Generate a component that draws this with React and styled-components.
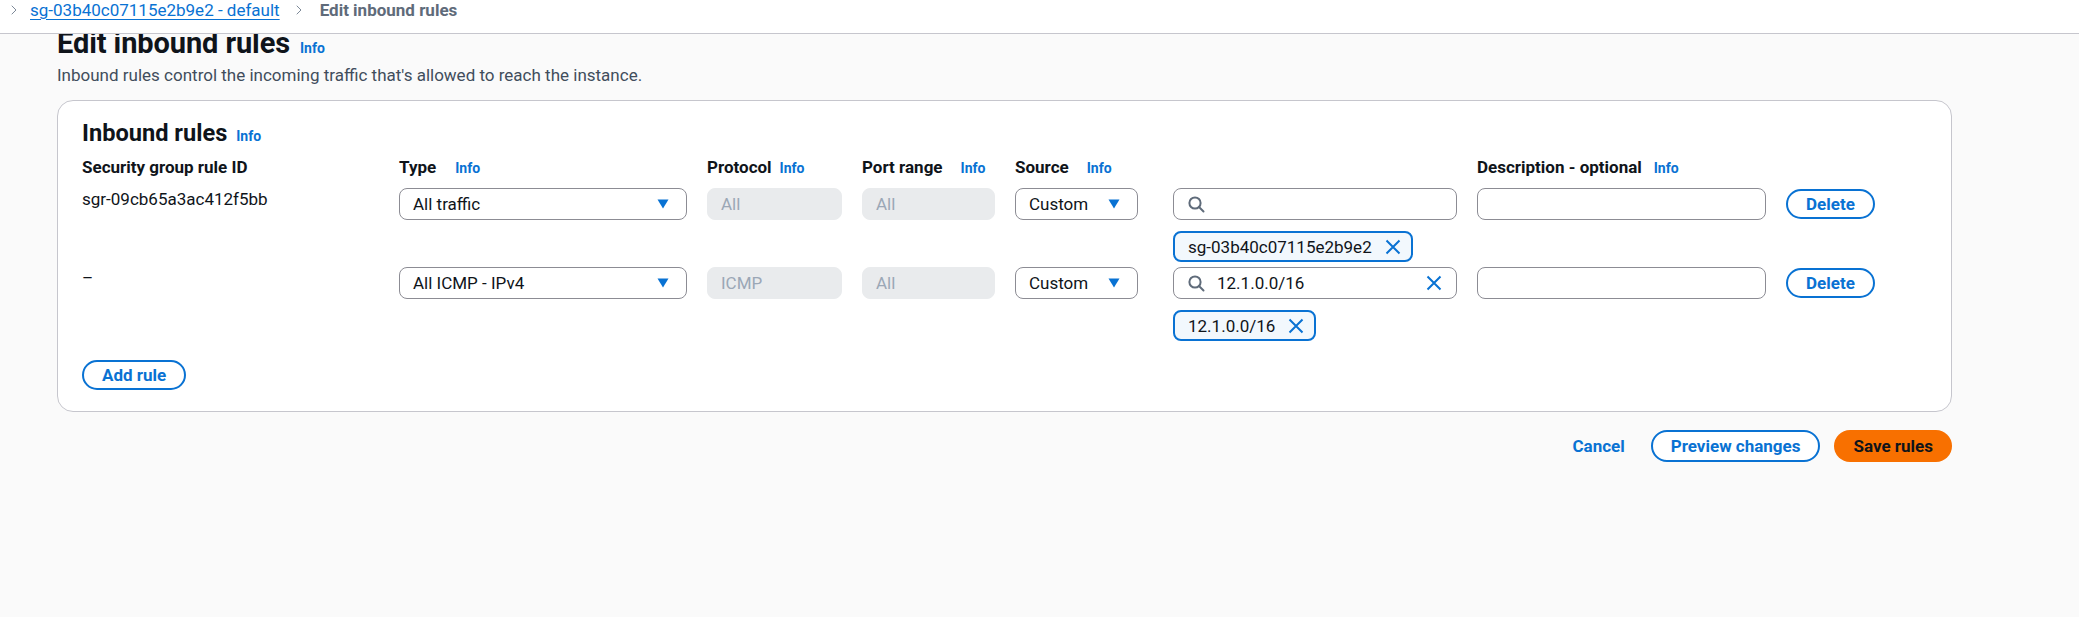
import React from 'react';
import styled, { createGlobalStyle } from 'styled-components';
import { ChevronRight } from 'lucide-react';

const GlobalStyle = createGlobalStyle`
  body {
    margin: 0;
    background: #fafafa;
    font-family: Roboto, "Liberation Sans", sans-serif;
    color: #0f141a;
  }
`;

const columns = '297px 288px 135px 133px 138px 284px 289px auto';

const rules = [
  {
    id: 'sgr-09cb65a3ac412f5bb',
    type: 'All traffic',
    protocol: 'All',
    port: 'All',
    query: '',
    token: 'sg-03b40c07115e2b9e2',
  },
  {
    id: '–',
    type: 'All ICMP - IPv4',
    protocol: 'ICMP',
    port: 'All',
    query: '12.1.0.0/16',
    token: '12.1.0.0/16',
  },
];

function Caret() {
  return (
    <svg width="12" height="10" viewBox="0 0 12 10">
      <path d="M0.5 0.5 H11.5 L6 9.5 Z" fill="#0972d3" />
    </svg>
  );
}

function SearchIcon() {
  return (
    <svg width="17" height="17" viewBox="0 0 17 17" fill="none" stroke="#5f6b7a" strokeWidth="2">
      <circle cx="7" cy="7" r="5.6" />
      <path d="M11 11 L15.5 15.5" strokeLinecap="round" />
    </svg>
  );
}

function CloseIcon() {
  return (
    <svg width="16" height="16" viewBox="0 0 16 16" fill="none" stroke="#0972d3" strokeWidth="2">
      <path d="M1.5 1.5 L14.5 14.5 M14.5 1.5 L1.5 14.5" />
    </svg>
  );
}

export default function App() {
  return (
    <>
      <GlobalStyle />
      <TopBar>
        <Crumb>
          <ChevronRight size={16} strokeWidth={1.5} color="#7d8998" />
        </Crumb>
        <CrumbLink>sg-03b40c07115e2b9e2 - default</CrumbLink>
        <Crumb>
          <ChevronRight size={16} strokeWidth={1.5} color="#7d8998" />
        </Crumb>
        <CrumbCurrent>Edit inbound rules</CrumbCurrent>
      </TopBar>

      <Main>
        <PageHeader>
          <Title>Edit inbound rules</Title>
          <Info>Info</Info>
        </PageHeader>
        <Lead>Inbound rules control the incoming traffic that's allowed to reach the instance.</Lead>

        <Card>
          <CardTitle>
            Inbound rules <Info>Info</Info>
          </CardTitle>

          <HeaderRow>
            <ColLabel>Security group rule ID</ColLabel>
            <ColLabel>Type <Info gap={19}>Info</Info></ColLabel>
            <ColLabel>Protocol <Info gap={8}>Info</Info></ColLabel>
            <ColLabel>Port range <Info gap={18}>Info</Info></ColLabel>
            <ColLabel>Source <Info gap={18}>Info</Info></ColLabel>
            <span />
            <ColLabel>Description - optional <Info gap={12}>Info</Info></ColLabel>
            <span />
          </HeaderRow>

          <RuleList>
            {rules.map((r) => (
              <RuleRow key={r.type}>
                <RuleId>{r.id}</RuleId>
                <Select>
                  <span>{r.type}</span>
                  <Caret />
                </Select>
                <Disabled>{r.protocol}</Disabled>
                <Disabled>{r.port}</Disabled>
                <Select narrow>
                  <span>Custom</span>
                  <Caret />
                </Select>
                <SourceCell>
                  <SearchBox>
                    <SearchIcon />
                    <SearchText>{r.query}</SearchText>
                    {r.query && <CloseIcon />}
                  </SearchBox>
                  <Token>
                    {r.token}
                    <CloseIcon />
                  </Token>
                </SourceCell>
                <TextBox />
                <ButtonCell>
                  <OutlineButton>Delete</OutlineButton>
                </ButtonCell>
              </RuleRow>
            ))}
          </RuleList>

          <AddRow>
            <OutlineButton>Add rule</OutlineButton>
          </AddRow>
        </Card>

        <Footer>
          <LinkButton>Cancel</LinkButton>
          <OutlineButton tall>Preview changes</OutlineButton>
          <PrimaryButton>Save rules</PrimaryButton>
        </Footer>
      </Main>
    </>
  );
}

const TopBar = styled.div`
  box-sizing: border-box;
  height: 34px;
  padding: 0 0 0 6px;
  background: #ffffff;
  border-bottom: 1px solid #c6c6cd;
  display: flex;
  align-items: flex-start;
`;

const Crumb = styled.span`
  display: flex;
  align-items: center;
  height: 20px;
  margin-right: 8px;
`;

const CrumbLink = styled.a`
  font-size: 17px;
  line-height: 20px;
  color: #0972d3;
  text-decoration: underline;
  text-underline-offset: 3px;
  margin-right: 11px;
`;

const CrumbCurrent = styled.span`
  font-size: 17px;
  line-height: 20px;
  font-weight: 700;
  color: #5f6b7a;
  margin-left: 5px;
`;

const Main = styled.main`
  overflow: hidden;
  padding: 0 127px 40px 57px;
`;

const PageHeader = styled.div`
  display: flex;
  align-items: baseline;
  margin-top: -7px;
`;

const Title = styled.h1`
  margin: 0;
  font-size: 29px;
  line-height: 32px;
  font-weight: 700;
  color: #0f141a;
  letter-spacing: -0.1px;
`;

const Info = styled.span`
  font-size: 14px;
  font-weight: 700;
  color: #0972d3;
  margin-left: ${(p) => (p.gap ?? 10)}px;
`;

const Lead = styled.p`
  margin: 6px 0 0;
  font-size: 17px;
  line-height: 20px;
  color: #414d5c;
`;

const Card = styled.section`
  margin-top: 15px;
  background: #ffffff;
  border: 1px solid #c6c6cd;
  border-radius: 16px;
  padding: 18px 24px 21px;
`;

const CardTitle = styled.h2`
  margin: 0;
  font-size: 23.6px;
  line-height: 28px;
  font-weight: 700;
  color: #0f141a;
  display: flex;
  align-items: baseline;
  & > span {
    margin-left: 9px;
  }
`;

const HeaderRow = styled.div`
  display: grid;
  grid-template-columns: ${columns};
  column-gap: 20px;
  margin-top: 7px;
`;

const ColLabel = styled.div`
  font-size: 17px;
  line-height: 20px;
  font-weight: 700;
  color: #0f141a;
  display: flex;
  align-items: baseline;
`;

const RuleList = styled.div`
  display: flex;
  flex-direction: column;
  gap: 5px;
  margin-top: 10px;
`;

const RuleRow = styled.div`
  display: grid;
  grid-template-columns: ${columns};
  column-gap: 20px;
  align-items: start;
`;

const RuleId = styled.div`
  font-size: 17px;
  line-height: 20px;
  padding-top: 1px;
  color: #0f141a;
`;

const Field = styled.div`
  box-sizing: border-box;
  height: 32px;
  border-radius: 8px;
  display: flex;
  align-items: center;
  font-size: 17px;
`;

const Select = styled(Field)`
  width: ${(p) => (p.narrow ? '123px' : '100%')};
  border: 1px solid #8c8c94;
  background: #ffffff;
  padding: 0 17px 0 13px;
  justify-content: space-between;
  color: #0f141a;
`;

const Disabled = styled(Field)`
  background: #e9ebed;
  border: 1px solid #e9ebed;
  padding: 0 13px;
  color: #9ba7b6;
`;

const TextBox = styled(Field)`
  border: 1px solid #8c8c94;
  background: #ffffff;
`;

const SourceCell = styled.div`
  display: flex;
  flex-direction: column;
  align-items: flex-start;
  gap: 11px;
`;

const SearchBox = styled(Field)`
  width: 100%;
  border: 1px solid #8c8c94;
  background: #ffffff;
  padding: 0 14px 0 14px;
  gap: 12px;
`;

const SearchText = styled.span`
  flex: 1;
  color: #0f141a;
`;

const Token = styled.div`
  box-sizing: border-box;
  height: 31px;
  display: flex;
  align-items: center;
  gap: 13px;
  padding: 0 10px 0 13px;
  border: 2px solid #0972d3;
  border-radius: 8px;
  background: #f2f8fd;
  font-size: 17px;
  color: #0f141a;
`;

const ButtonCell = styled.div`
  height: 32px;
  display: flex;
  align-items: center;
`;

const OutlineButton = styled.button`
  box-sizing: border-box;
  height: ${(p) => (p.tall ? '32px' : '30px')};
  padding: 0 18px;
  border: 2px solid #0972d3;
  border-radius: 20px;
  background: #ffffff;
  color: #0972d3;
  font-family: Roboto, "Liberation Sans", sans-serif;
  font-size: 17px;
  font-weight: 700;
  cursor: pointer;
`;

const AddRow = styled.div`
  margin-top: 19px;
  display: flex;
`;

const Footer = styled.div`
  margin-top: 18px;
  display: flex;
  justify-content: flex-end;
  align-items: center;
  gap: 14px;
`;

const LinkButton = styled.button`
  height: 32px;
  padding: 0 12px 0 16px;
  border: 0;
  background: transparent;
  color: #0972d3;
  font-family: Roboto, "Liberation Sans", sans-serif;
  font-size: 17px;
  font-weight: 700;
  cursor: pointer;
`;

const PrimaryButton = styled.button`
  box-sizing: border-box;
  height: 32px;
  padding: 0 19px;
  border: 0;
  border-radius: 20px;
  background: #f87000;
  color: #0f141a;
  font-family: Roboto, "Liberation Sans", sans-serif;
  font-size: 17px;
  font-weight: 700;
  cursor: pointer;
`;
